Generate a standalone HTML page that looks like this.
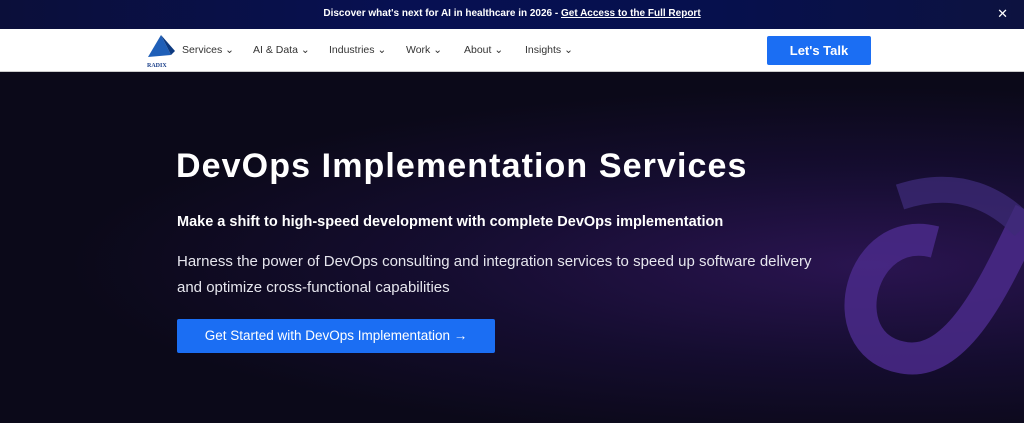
<!DOCTYPE html>
<html><head><meta charset="utf-8"><style>
*{margin:0;padding:0;box-sizing:border-box}
body{width:1024px;height:423px;overflow:hidden;font-family:"Liberation Sans",sans-serif;background:#0b0919;position:relative}
.top{position:absolute;left:0;top:0;width:1024px;height:29px;background:linear-gradient(90deg,#0b0f3a,#071052 40%,#06104d 70%,#0d1240);color:#fff;font-size:10px;font-weight:bold;text-align:center;line-height:27px}
.top u{text-decoration:underline}
.x{position:absolute;right:16px;top:0;font-size:13px;font-weight:normal}
.nav{position:absolute;top:29px;left:0;width:1024px;height:43px;background:#fff;border-bottom:1px solid #ccc}
.nav .m{position:absolute;top:15px;font-size:10.5px;color:#333}
.btn1{position:absolute;left:767px;top:7px;width:104px;height:29px;background:#1b6ef3;border-radius:2px;color:#fff;font-size:13px;font-weight:bold;text-align:center;line-height:29px}
.hero{position:absolute;top:72px;left:0;width:1024px;height:351px;background:radial-gradient(ellipse at 85% 55%,#2a1450 0%,#150d30 35%,#0b0919 65%)}
h1{position:absolute;left:176px;top:147px;font-size:34px;color:#fff;font-weight:bold;letter-spacing:1.1px}
.s{position:absolute;left:177px;top:214px;font-size:14.5px;color:#fff;font-weight:bold}
.p{position:absolute;left:177px;top:249px;font-size:15px;color:#e6e6ee;line-height:26px}
.b{position:absolute;left:177px;top:319px;width:318px;height:34px;background:#1b6ef3;border-radius:2px;color:#fff;font-size:13.5px;text-align:center;line-height:34px}
</style></head><body>
<div class="hero">
<svg width="1024" height="351" style="position:absolute;left:0;top:0">
<path d="M935 170 C 860 150, 830 270, 900 285 C 960 300, 1000 200, 1030 140" fill="none" stroke="#4a2a8a" stroke-width="32" opacity="0.85"/>
<path d="M900 125 C 960 105, 1000 130, 1024 155" fill="none" stroke="#3d2b78" stroke-width="26" opacity="0.75"/>
</svg>
</div>
<div class="top">Discover what's next for AI in healthcare in 2026 - <u>Get Access to the Full Report</u><span class="x">✕</span></div>
<div class="nav">
<svg style="position:absolute;left:145px;top:4px" width="32" height="36"><polygon points="16,2 3,24 26,22" fill="#1f5fb8"/><polygon points="16,2 26,22 30,18" fill="#0d3a80"/><text x="2" y="34" font-size="6" font-weight="bold" fill="#1a3f8a" font-family="Liberation Serif">RADIX</text></svg>
<span class="m" style="left:182px">Services ⌄</span>
<span class="m" style="left:253px">AI &amp; Data ⌄</span>
<span class="m" style="left:329px">Industries ⌄</span>
<span class="m" style="left:406px">Work ⌄</span>
<span class="m" style="left:464px">About ⌄</span>
<span class="m" style="left:525px">Insights ⌄</span>
<div class="btn1">Let's Talk</div>
</div>
<h1>DevOps Implementation Services</h1>
<div class="s">Make a shift to high-speed development with complete DevOps implementation</div>
<div class="p">Harness the power of DevOps consulting and integration services to speed up software delivery<br>and optimize cross-functional capabilities</div>
<div class="b">Get Started with DevOps Implementation →</div>
</body></html>
